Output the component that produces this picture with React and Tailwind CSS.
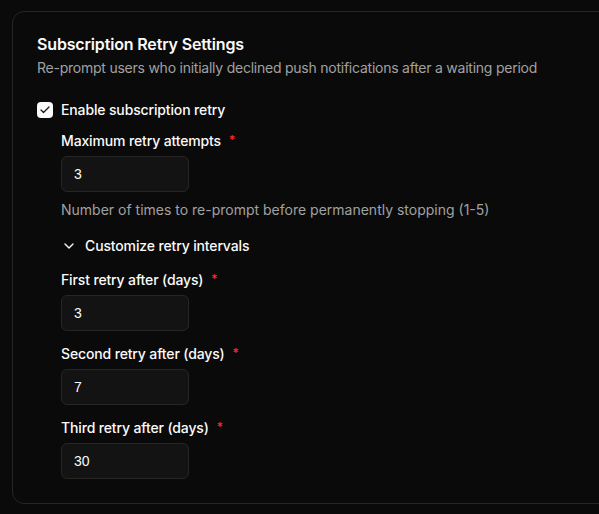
import React, { useState } from 'react';
import { Check, ChevronDown } from 'lucide-react';

const font = { fontFamily: 'Inter, "Noto Sans", sans-serif' };

const Field = ({ label, value }) => (
  <div>
    <label className="flex items-start text-sm font-medium leading-none tracking-[-0.01em] text-[#fafafa] mb-2">
      {label}
      <span className="ml-2 text-red-500 text-xs leading-none">*</span>
    </label>
    <input
      type="text"
      defaultValue={value}
      className="w-[128px] h-9 rounded-md border border-[#262626] bg-[#131313] px-3 text-sm text-[#fafafa] outline-none"
      style={{ fontFamily: '"Liberation Sans", Arial, sans-serif' }}
    />
  </div>
);

export default function App() {
  const [enabled, setEnabled] = useState(true);
  const [open, setOpen] = useState(true);

  return (
    <div className="min-h-screen bg-[#0a0a0a] pt-[11px] pl-3 overflow-hidden" style={font}>
      <div className="w-[620px] rounded-xl border border-[#262626] bg-[#0a0a0a] p-6 flex flex-col gap-6">
        {/* Header */}
        <div className="flex flex-col gap-1.5">
          <h2 className="text-base font-semibold leading-none tracking-[-0.01em] text-[#fafafa]">Subscription Retry Settings</h2>
          <p className="text-sm text-[#a1a1a1] tracking-[-0.017em]">
            Re-prompt users who initially declined push notifications after a waiting period
          </p>
        </div>

        {/* Content */}
        <div className="flex flex-col gap-4">
          <label className="flex items-center gap-2 cursor-pointer">
            <button
              onClick={() => setEnabled(!enabled)}
              className={`w-4 h-4 rounded-[4px] flex items-center justify-center ${enabled ? 'bg-[#fafafa]' : 'border border-[#404040]'}`}
            >
              {enabled && <Check size={12} strokeWidth={2.5} className="text-[#171717]" />}
            </button>
            <span className="text-sm font-medium leading-none tracking-[-0.01em] text-[#fafafa]">Enable subscription retry</span>
          </label>

          <div className="pl-6 flex flex-col gap-4">
            <div>
              <Field label="Maximum retry attempts" value="3" />
              <p className="mt-2 text-sm text-[#a1a1a1]">
                Number of times to re-prompt before permanently stopping (1-5)
              </p>
            </div>

            <button onClick={() => setOpen(!open)} className="flex items-center gap-2 h-5 mb-px text-sm font-medium tracking-[-0.01em] text-[#fafafa]">
              <ChevronDown size={16} className={open ? '' : '-rotate-90'} />
              Customize retry intervals
            </button>

            {open && (
              <div className="flex flex-col gap-4">
                <Field label="First retry after (days)" value="3" />
                <Field label="Second retry after (days)" value="7" />
                <Field label="Third retry after (days)" value="30" />
              </div>
            )}
          </div>
        </div>
      </div>
    </div>
  );
}
